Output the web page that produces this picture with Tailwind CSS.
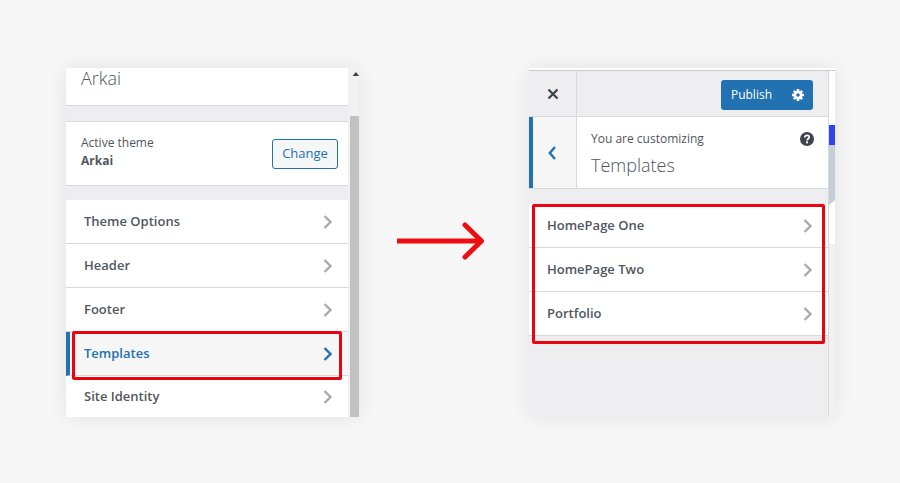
<!DOCTYPE html>
<html lang="en">
<head>
    <meta charset="UTF-8">
    <meta name="viewport" content="width=device-width, initial-scale=1.0">
    <title>Customizer - Templates</title>
    <script src="https://cdn.jsdelivr.net/npm/@tailwindcss/browser@4"></script>
</head>
<body class="bg-[#f7f7f7] font-['Open_Sans',sans-serif] text-[13px] text-[#50575e]">
    <main class="grid grid-cols-[293fr_170fr_306fr] items-start pt-[68px] pb-16 pl-[66px] pr-[65px]">

        <!-- Customizer root panel -->
        <section class="flex bg-[#f1f1f1] shadow-[0_0_20px_rgba(0,0,0,0.09)]">
            <div class="flex-1 bg-[#eeeef0]">
                <div class="h-[38px] border-b border-[#d8d9db] bg-white px-[15px]">
                    <h2 class="text-lg leading-5 font-light">Arkai</h2>
                </div>

                <div class="mt-[15px] flex h-[65px] items-center justify-between border-y border-[#d8d9db] bg-white pl-[15px] pr-[10px]">
                    <div class="pb-1 text-xs leading-[18px]">
                        <p>Active theme</p>
                        <h3 class="font-bold">Arkai</h3>
                    </div>
                    <button class="h-[30px] w-[66px] rounded-[3px] border border-[#2271b1] bg-[#f6f7f7] pt-px text-[#2271b1]">Change</button>
                </div>

                <ul class="mt-[14px] font-semibold">
                    <li><a href="#options" class="flex h-11 items-center justify-between border-b border-[#d8d9db] bg-white pl-[18px] pr-4">
                        Theme Options
                        <svg class="h-4 w-[9px]" viewBox="0 0 9 16" fill="none" stroke="#a7aaad" stroke-width="2.4"><path d="M1.500 2l6 6-6 6"/></svg>
                    </a></li>
                    <li><a href="#header" class="flex h-11 items-center justify-between border-b border-[#d8d9db] bg-white pl-[18px] pr-4">
                        Header
                        <svg class="h-4 w-[9px]" viewBox="0 0 9 16" fill="none" stroke="#a7aaad" stroke-width="2.4"><path d="M1.500 2l6 6-6 6"/></svg>
                    </a></li>
                    <li><a href="#footer" class="flex h-11 items-center justify-between border-b border-[#d8d9db] bg-white pl-[18px] pr-4">
                        Footer
                        <svg class="h-4 w-[9px]" viewBox="0 0 9 16" fill="none" stroke="#a7aaad" stroke-width="2.4"><path d="M1.500 2l6 6-6 6"/></svg>
                    </a></li>
                    <li class="relative"><a href="#templates" class="flex h-11 items-center justify-between border-b border-l-4 border-b-[#d8d9db] border-l-[#2271b1] bg-[#f6f6f7] pl-[14px] pr-4 text-[#2271b1]">
                        Templates
                        <svg class="h-4 w-[9px]" viewBox="0 0 9 16" fill="none" stroke="#2271b1" stroke-width="2.4"><path d="M1.500 2l6 6-6 6"/></svg>
                    </a>
                    <span class="pointer-events-none absolute -top-px -bottom-1 left-[6px] right-[6px] rounded-xs border-3 border-[#ea0410]"></span></li>
                    <li><a href="#identity" class="flex h-[41px] items-center justify-between bg-white pl-[18px] pr-4">
                        Site Identity
                        <svg class="h-4 w-[9px]" viewBox="0 0 9 16" fill="none" stroke="#a7aaad" stroke-width="2.4"><path d="M1.500 2l6 6-6 6"/></svg>
                    </a></li>
                </ul>
            </div>

            <!-- scrollbar -->
            <div class="flex w-[11px] flex-col items-end">
                <svg class="h-12 w-[9px]" viewBox="0 0 9 48" fill="#404040"><path d="M2.500 8L6 4l3 4z"/></svg>
                <div class="w-[9px] flex-1 bg-[#c1c1c1]"></div>
            </div>
        </section>

        <div class="flex justify-center pt-[151px] pr-[6px]">
            <svg class="h-11 w-[88px]" viewBox="0 0 88 44" fill="none" stroke="#ee0d10">
                <path d="M0 22H84" stroke-width="5"/>
                <path d="M68 6l16.500 16L68 38" stroke-width="5" stroke-linecap="round" stroke-linejoin="round"/>
            </svg>
        </div>

        <!-- Templates sub panel -->
        <section class="flex self-stretch bg-white pt-0.5 shadow-[0_0_20px_rgba(0,0,0,0.09)]">
            <div class="flex-1 border-t border-r border-t-[#c9cacc] border-r-[#d8d9db] bg-[#eeeef0]">
                <div class="flex h-[46px] border-b border-[#d8d9db]">
                    <button class="flex w-12 items-center justify-center border-r border-[#d8d9db]" aria-label="Close">
                        <svg class="size-3" viewBox="0 0 12 12" fill="none" stroke="#3c434a" stroke-width="2.300"><path d="M1.500 1.500l9 9M10.500 1.500l-9 9"/></svg>
                    </button>
                    <div class="flex flex-1 items-center justify-end pt-0.5 pr-[15px] text-white">
                        <button class="h-[30px] rounded-l-[3px] bg-[#2271b1] px-[10px] text-xs">Publish</button>
                        <button class="flex h-[30px] w-[31px] items-center justify-center rounded-r-[3px] bg-[#2271b1]" aria-label="Publish settings">
                            <svg class="size-3" viewBox="0 0 12 12">
                                <g stroke="#fff" stroke-width="2.600"><path d="M6 0v12M0 6h12M1.800 1.800l8.400 8.400M10.200 1.800l-8.400 8.400"/></g>
                                <circle cx="6" cy="6" r="4.300" fill="#fff"/>
                                <circle cx="6" cy="6" r="1.800" fill="#2271b1"/>
                            </svg>
                        </button>
                    </div>
                </div>

                <div class="flex h-[72px] border-b border-[#d8d9db] bg-white">
                    <button class="flex w-12 items-center justify-center border-r border-l-4 border-r-[#d8d9db] border-l-[#2271b1] bg-[#f6f6f7] pr-[6px]" aria-label="Back">
                        <svg class="h-[14px] w-2" viewBox="0 0 8 14" fill="none" stroke="#2271b1" stroke-width="2.400"><path d="M7 1L1.800 7 7 13"/></svg>
                    </button>
                    <div class="flex flex-1 items-start justify-between pt-3 px-[14px]">
                        <div>
                            <p class="text-xs leading-5">You are customizing</p>
                            <h3 class="text-lg leading-8 font-light">Templates</h3>
                        </div>
                        <button class="mt-[3px]" aria-label="Help">
                            <svg class="size-[14px]" viewBox="0 0 14 14" fill="none">
                                <circle cx="7" cy="7" r="7" fill="#3c434a"/>
                                <path d="M4.800 5.500c0-1.500 1-2.200 2.300-2.200s2.200.8 2.200 1.900c0 1.500-2.200 1.500-2.200 3.200" stroke="#fff" stroke-width="1.700"/>
                                <circle cx="7" cy="10.400" r="1.050" fill="#fff"/>
                            </svg>
                        </button>
                    </div>
                </div>

                <div class="relative mt-[15px]">
                    <ul class="font-semibold">
                        <li><a href="#one" class="flex h-11 items-center justify-between border-b border-[#d8d9db] bg-white pl-[18px] pr-4">
                            HomePage One
                            <svg class="h-4 w-[9px]" viewBox="0 0 9 16" fill="none" stroke="#a7aaad" stroke-width="2.400"><path d="M1.500 2l6 6-6 6"/></svg>
                        </a></li>
                        <li><a href="#two" class="flex h-11 items-center justify-between border-b border-[#d8d9db] bg-white pl-[18px] pr-4">
                            HomePage Two
                            <svg class="h-4 w-[9px]" viewBox="0 0 9 16" fill="none" stroke="#a7aaad" stroke-width="2.400"><path d="M1.500 2l6 6-6 6"/></svg>
                        </a></li>
                        <li><a href="#portfolio" class="flex h-11 items-center justify-between border-b border-[#d8d9db] bg-white pl-[18px] pr-4">
                            Portfolio
                            <svg class="h-4 w-[9px]" viewBox="0 0 9 16" fill="none" stroke="#a7aaad" stroke-width="2.400"><path d="M1.500 2l6 6-6 6"/></svg>
                        </a></li>
                    </ul>
                    <span class="pointer-events-none absolute top-0 -bottom-2 left-[3px] right-[3px] rounded-xs border-3 border-[#ea0410]"></span>
                </div>
            </div>

            <!-- edge of the site preview -->
            <div class="flex w-[6px] flex-col border-t border-[#c9cacc]">
                <div class="h-[54px] bg-white"></div>
                <div class="h-5 bg-[#3344ee]"></div>
                <svg class="h-[60px] w-full" viewBox="0 0 6 60" preserveAspectRatio="none"><path d="M0 0h6v55l-6 5z" fill="#c5ced6"/></svg>
                <div class="h-[39px] bg-white"></div>
                <div class="flex-1 bg-[#f1f1f1]"></div>
            </div>
        </section>
    </main>
</body>
</html>
